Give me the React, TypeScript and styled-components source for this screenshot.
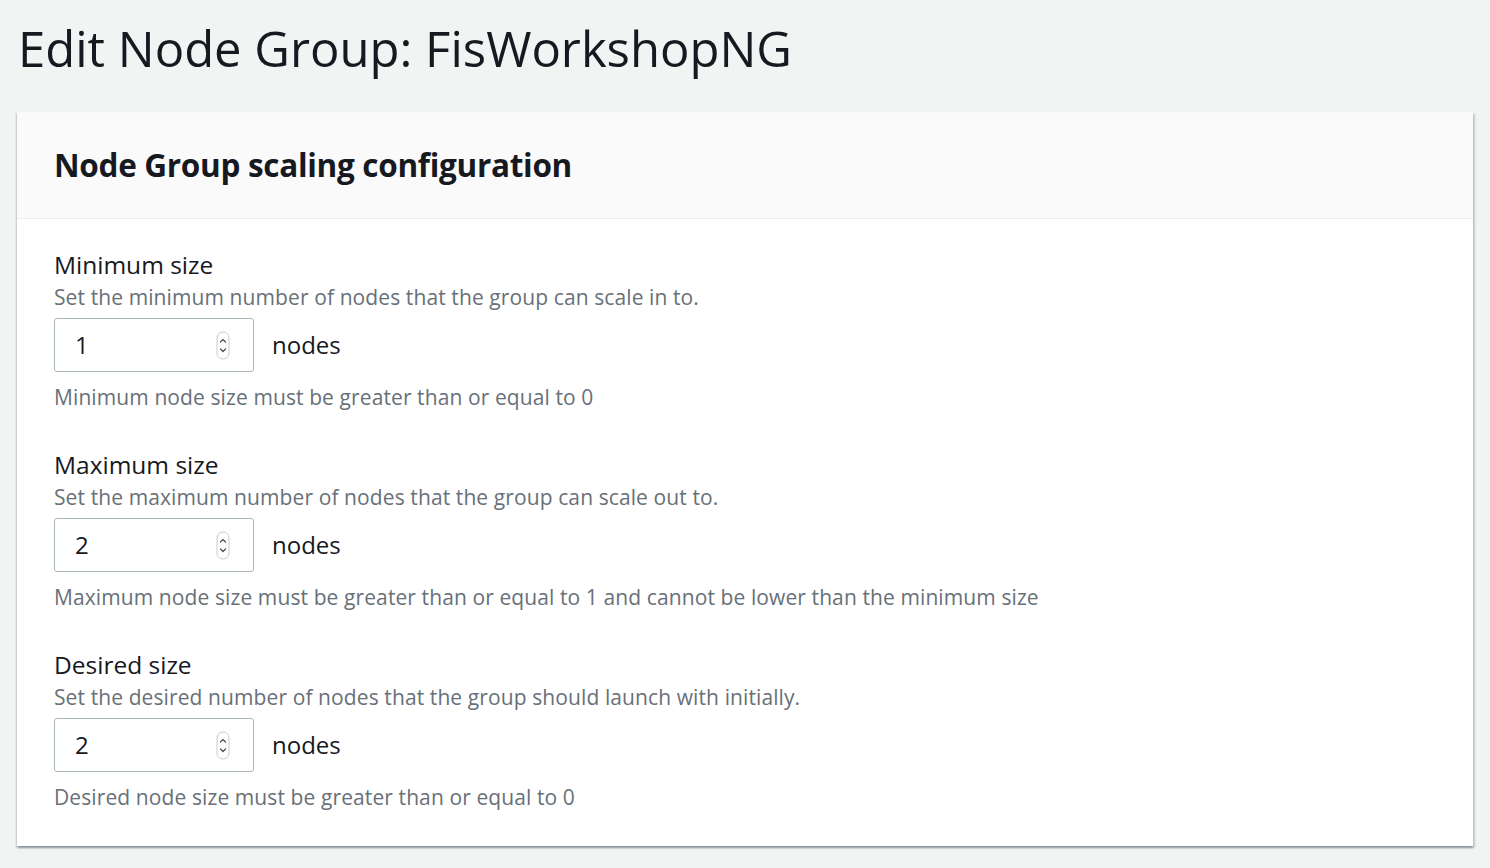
import React from 'react';
import styled, { createGlobalStyle } from 'styled-components';

const GlobalStyle = createGlobalStyle`
  html,
  body {
    margin: 0;
    padding: 0;
    background: #f2f3f3;
  }

  body {
    font-family: 'Open Sans', 'Noto Sans', Arial, sans-serif;
    color: #16191f;
    -webkit-font-smoothing: antialiased;
  }
`;

const Page = styled.div`
  width: 1490px;
  min-height: 868px;
  padding: 0 17px;
  box-sizing: border-box;
  overflow: hidden;
`;

const PageTitle = styled.h1`
  margin: 0;
  padding: 18px 0 0 1px;
  height: 112px;
  box-sizing: border-box;
  font-size: 49px;
  line-height: 60px;
  font-weight: 400;
  color: #16191f;
`;

const Card = styled.section`
  width: 1456px;
  background: #ffffff;
  box-shadow: 0 2px 2px 0 rgba(0, 28, 36, 0.3),
    2px 2px 2px 0 rgba(0, 28, 36, 0.15), -1px 1px 2px 0 rgba(0, 28, 36, 0.1);
`;

const CardHeader = styled.header`
  display: flex;
  align-items: center;
  height: 106px;
  padding: 0 37px;
  background: #fafafa;
  border-bottom: 1px solid #eaeded;
`;

const CardTitle = styled.h2`
  margin: 0;
  font-size: 31.5px;
  line-height: 40px;
  font-weight: 700;
  color: #16191f;
  letter-spacing: -0.3px;
`;

const CardBody = styled.div`
  display: flex;
  flex-direction: column;
  gap: 38px;
  padding: 31px 37px 34px;
`;

const Field = styled.div`
  display: flex;
  flex-direction: column;
`;

const Label = styled.label`
  font-size: 24.5px;
  line-height: 30px;
  color: #16191f;
`;

const Description = styled.div`
  margin-top: 2px;
  font-size: 21px;
  line-height: 30px;
  letter-spacing: 0.1px;
  color: #687078;
`;

const Constraint = styled(Description)`
  margin-top: 10px;
`;

const InputRow = styled.div`
  display: flex;
  align-items: center;
  gap: 18px;
  margin-top: 6px;
`;

const NumberBox = styled.div`
  display: flex;
  align-items: center;
  justify-content: space-between;
  width: 200px;
  height: 54px;
  box-sizing: border-box;
  padding: 0 23px 0 20px;
  border: 1px solid #aab7b8;
  border-radius: 3px;
  background: #ffffff;
`;

const Value = styled.span`
  font-size: 24px;
  line-height: 30px;
  color: #16191f;
`;

const Unit = styled.span`
  font-size: 24px;
  line-height: 30px;
  color: #16191f;
`;

const Spinner = () => (
  <svg width="14" height="29" viewBox="0 0 14 29" aria-hidden="true">
    <rect
      x="1"
      y="1"
      width="12"
      height="27"
      rx="6"
      fill="#ffffff"
      stroke="#c6cbcd"
      strokeWidth="1"
    />
    <path
      d="M4.5 11 L7 8.5 L9.5 11"
      fill="none"
      stroke="#4a4f55"
      strokeWidth="1.2"
      strokeLinecap="round"
      strokeLinejoin="round"
    />
    <path
      d="M4.5 18 L7 20.5 L9.5 18"
      fill="none"
      stroke="#4a4f55"
      strokeWidth="1.2"
      strokeLinecap="round"
      strokeLinejoin="round"
    />
  </svg>
);

type FieldData = {
  label: string;
  description: string;
  value: number;
  constraint: string;
};

const fields: FieldData[] = [
  {
    label: 'Minimum size',
    description: 'Set the minimum number of nodes that the group can scale in to.',
    value: 1,
    constraint: 'Minimum node size must be greater than or equal to 0',
  },
  {
    label: 'Maximum size',
    description: 'Set the maximum number of nodes that the group can scale out to.',
    value: 2,
    constraint:
      'Maximum node size must be greater than or equal to 1 and cannot be lower than the minimum size',
  },
  {
    label: 'Desired size',
    description:
      'Set the desired number of nodes that the group should launch with initially.',
    value: 2,
    constraint: 'Desired node size must be greater than or equal to 0',
  },
];

const SizeField: React.FC<FieldData> = ({
  label,
  description,
  value,
  constraint,
}) => (
  <Field>
    <Label>{label}</Label>
    <Description>{description}</Description>
    <InputRow>
      <NumberBox>
        <Value>{value}</Value>
        <Spinner />
      </NumberBox>
      <Unit>nodes</Unit>
    </InputRow>
    <Constraint>{constraint}</Constraint>
  </Field>
);

export default function App() {
  return (
    <>
      <GlobalStyle />
      <Page>
        <PageTitle>Edit Node Group: FisWorkshopNG</PageTitle>
        <Card>
          <CardHeader>
            <CardTitle>Node Group scaling configuration</CardTitle>
          </CardHeader>
          <CardBody>
            {fields.map((f) => (
              <SizeField key={f.label} {...f} />
            ))}
          </CardBody>
        </Card>
      </Page>
    </>
  );
}
